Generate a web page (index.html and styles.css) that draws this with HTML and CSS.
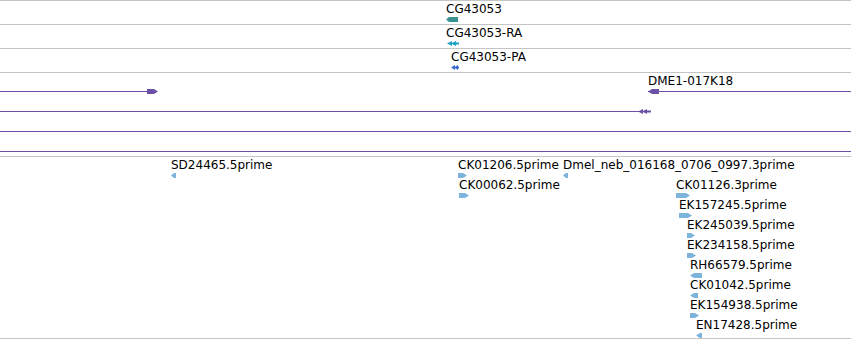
FILE: index.html
```html
<!DOCTYPE html>
<html lang="en">
<head>
    <meta charset="UTF-8">
    <title>Tracks</title>
    <link rel="stylesheet" href="styles.css">
</head>
<body>

    <div class="view">
        <!-- gene -->
        <div class="track gene">
            <div class="feat" style="left:446px;top:1px">
                <div class="label">CG43053</div>
                <svg class="glyph" width="12" height="6"><polygon class="teal" points="0,3.5 3,1 12,1 12,6 3,6"/></svg>
            </div>
        </div>

        <!-- transcript -->
        <div class="track gene">
            <div class="feat" style="left:446px;top:1px">
                <div class="label">CG43053-RA</div>
                <svg class="glyph" width="13" height="6">
                    <polygon class="cyan" points="1,3.5 6,1 6,6"/>
                    <polygon class="cyan" points="5,3.5 10,1 10,6"/>
                    <rect class="cyan" x="9" y="2.5" width="4" height="2"/>
                </svg>
            </div>
        </div>

        <!-- protein -->
        <div class="track gene">
            <div class="feat" style="left:451px;top:1px">
                <div class="label">CG43053-PA</div>
                <svg class="glyph" width="8" height="6">
                    <polygon class="blue" points="0,3.5 4,1 4,6"/>
                    <polygon class="blue" points="3,3.5 7,1 7,6"/>
                    <rect class="blue" x="6" y="2.5" width="2" height="2"/>
                </svg>
            </div>
        </div>

        <!-- clones -->
        <div class="track clones">
            <div class="feat" style="left:648px;top:1px">
                <div class="label">DME1-017K18</div>
                <svg class="glyph" width="203" height="6">
                    <rect class="purple" x="0" y="3" width="203" height="1"/>
                    <polygon class="purple" points="0,3.5 4,1 11,1 11,6 4,6"/>
                </svg>
            </div>
            <svg class="glyph span" style="left:0;top:15px" width="158" height="6">
                <rect class="purple" x="0" y="3" width="150" height="1"/>
                <polygon class="purple" points="147,1 154,1 158,3.5 154,6 147,6"/>
            </svg>
            <svg class="glyph span" style="left:0;top:35px" width="651" height="6">
                <rect class="purple" x="0" y="3" width="640" height="1"/>
                <polygon class="purple" points="638,3.5 643,1 643,6"/>
                <polygon class="purple" points="642,3.5 647,1 647,6"/>
                <rect class="purple" x="646" y="2.5" width="5" height="2"/>
            </svg>
            <svg class="glyph span" style="left:0;top:55px" width="851" height="6">
                <rect class="purple" x="0" y="3" width="851" height="1"/>
            </svg>
            <svg class="glyph span" style="left:0;top:75px" width="851" height="6">
                <rect class="purple" x="0" y="3" width="851" height="1"/>
            </svg>
        </div>

        <!-- ests -->
        <div class="track ests">
            <div class="feat" style="left:171px;top:1px">
                <div class="label">SD24465.5prime</div>
                <svg class="glyph" width="5" height="6"><polygon class="est" points="0,3.5 3,1 5,1 5,6 3,6"/></svg>
            </div>
            <div class="feat" style="left:458px;top:1px">
                <div class="label">CK01206.5prime</div>
                <svg class="glyph" width="9" height="6"><polygon class="est" points="0,1 5,1 9,3.5 5,6 0,6"/></svg>
            </div>
            <div class="feat" style="left:563px;top:1px">
                <div class="label">Dmel_neb_016168_0706_0997.3prime</div>
                <svg class="glyph" width="5" height="6"><polygon class="est" points="0,3.5 3,1 5,1 5,6 3,6"/></svg>
            </div>
            <div class="feat" style="left:459px;top:21px">
                <div class="label">CK00062.5prime</div>
                <svg class="glyph" width="10" height="6"><polygon class="est" points="0,1 6,1 10,3.5 6,6 0,6"/></svg>
            </div>
            <div class="feat" style="left:676px;top:21px">
                <div class="label">CK01126.3prime</div>
                <svg class="glyph" width="14" height="6"><polygon class="est" points="0,1 10,1 14,3.5 10,6 0,6"/></svg>
            </div>
            <div class="feat" style="left:679px;top:41px">
                <div class="label">EK157245.5prime</div>
                <svg class="glyph" width="13" height="6"><polygon class="est" points="0,1 9,1 13,3.5 9,6 0,6"/></svg>
            </div>
            <div class="feat" style="left:687px;top:61px">
                <div class="label">EK245039.5prime</div>
                <svg class="glyph" width="8" height="6"><polygon class="est" points="0,1 4,1 8,3.5 4,6 0,6"/></svg>
            </div>
            <div class="feat" style="left:687px;top:81px">
                <div class="label">EK234158.5prime</div>
                <svg class="glyph" width="9" height="6"><polygon class="est" points="0,1 5,1 9,3.5 5,6 0,6"/></svg>
            </div>
            <div class="feat" style="left:690px;top:101px">
                <div class="label">RH66579.5prime</div>
                <svg class="glyph" width="12" height="6"><polygon class="est" points="0,3.5 4,1 12,1 12,6 4,6"/></svg>
            </div>
            <div class="feat" style="left:690px;top:121px">
                <div class="label">CK01042.5prime</div>
                <svg class="glyph" width="8" height="6"><polygon class="est" points="0,3.5 4,1 8,1 8,6 4,6"/></svg>
            </div>
            <div class="feat" style="left:690px;top:141px">
                <div class="label">EK154938.5prime</div>
                <svg class="glyph" width="9" height="6"><polygon class="est" points="0,1 5,1 9,3.5 5,6 0,6"/></svg>
            </div>
            <div class="feat" style="left:696px;top:161px">
                <div class="label">EN17428.5prime</div>
                <svg class="glyph" width="6" height="6"><polygon class="est" points="0,3.5 4,1 6,1 6,6 4,6"/></svg>
            </div>
        </div>
    </div>

</body>
</html>
```

FILE: styles.css
```css
body{ margin: 0; padding: 0; background: #fff; }

.view{
    width: 851px;
    font-family: "DejaVu Sans", sans-serif;
    font-size: 12px;
    color: #000;
}

.track{
    position: relative;
    border-top: 1px solid #c4c4c4;
    overflow: hidden;
}

.track.gene{ height: 23px; }
.track.clones{ height: 83px; }
.track.ests{
    height: 181px;
    border-bottom: 1px solid #c4c4c4;
}

.feat{
    position: absolute;
    white-space: nowrap;
}

.feat .label{
    height: 14px;
    line-height: 14px;
}

.glyph{ display: block; }
.glyph.span{ position: absolute; }

.teal{ fill: #3b9292; }
.cyan{ fill: #1b9fc4; }
.blue{ fill: #3a6ccc; }
.purple{ fill: #6c50a6; }
.est{ fill: #7cb4dc; }
```
